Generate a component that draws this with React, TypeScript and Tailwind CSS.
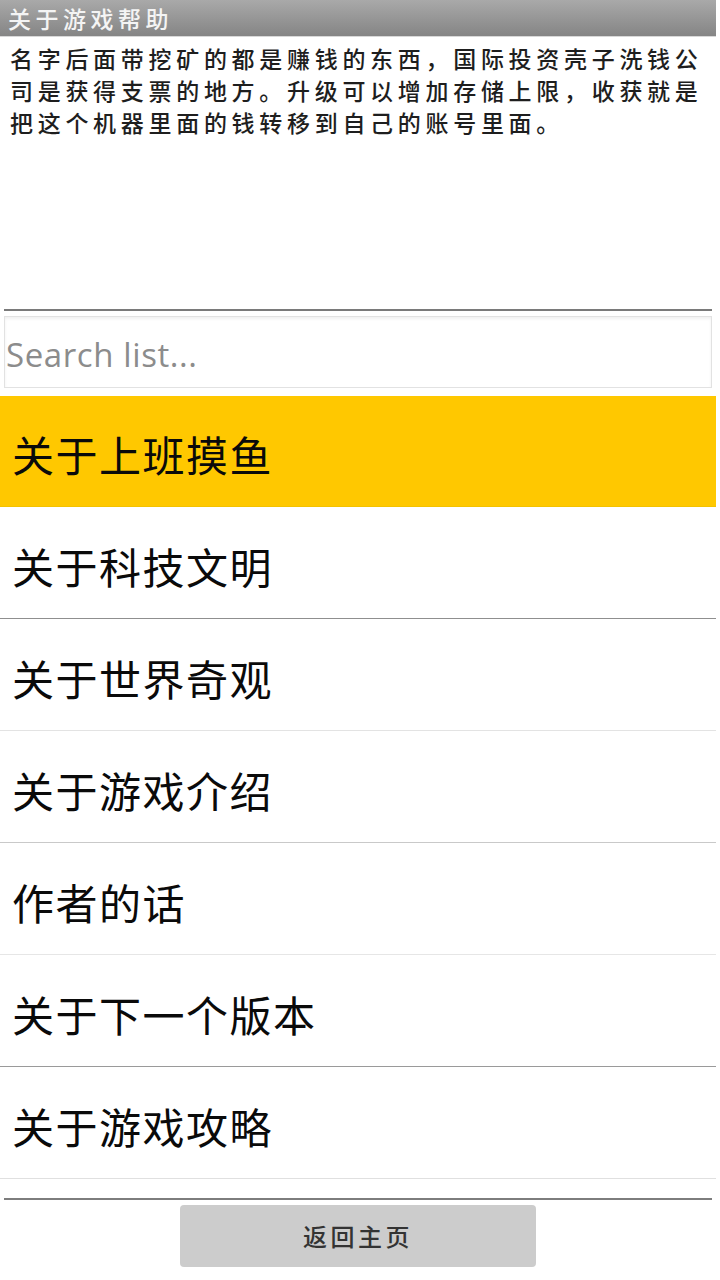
import React from "react";

const cjk = { fontFamily: '"Noto Sans CJK SC", "Noto Sans", sans-serif' };

const items = [
  { label: "关于上班摸鱼", line: "border-[#f3c200]" },
  { label: "关于科技文明", line: "border-[#8f8f8f]" },
  { label: "关于世界奇观", line: "border-[#e3e3e3]" },
  { label: "关于游戏介绍", line: "border-[#c9c9c9]" },
  { label: "作者的话", line: "border-[#e6e6e6]" },
  { label: "关于下一个版本", line: "border-[#9a9a9a]" },
  { label: "关于游戏攻略", line: "border-[#e0e0e0]" },
];

function App() {
  return (
    <div className="w-[720px] h-[1280px] bg-white overflow-hidden flex flex-col" style={cjk}>
      <div className="w-[716px] h-[37px] bg-gradient-to-b from-[#a9a9a9] to-[#858585] border-b border-[#d8d8d8] flex items-center pl-[8px]">
        <span className="text-[23px] font-medium tracking-[4.5px] text-[#f4f4f4] leading-none">关于游戏帮助</span>
      </div>
      <div className="h-[272px] pl-[10px] pt-[5px]">
        <p className="w-[700px] text-[23px] font-medium leading-[32px] tracking-[4.7px] text-[#1e1e1e]">
          名字后面带挖矿的都是赚钱的东西，国际投资壳子洗钱公司是获得支票的地方。升级可以增加存储上限，收获就是把这个机器里面的钱转移到自己的账号里面。
        </p>
      </div>
      <div className="mx-[4px] w-[708px] h-[2px] bg-[#7a7a7a]" />
      <div className="mx-[4px] mt-[5px] w-[708px] h-[72px] border border-[#e2e2e2] shadow-[inset_0_2px_3px_rgba(0,0,0,0.06)] flex items-center pl-[1px] pt-[6px]">
        <span className="text-[33px] tracking-[0.6px] text-[#8c8c8c]" style={{ fontFamily: '"Open Sans", Lato, sans-serif' }}>
          Search list...
        </span>
      </div>
      <div className="mt-[8px] w-[716px] flex flex-col">
        {items.map((it, i) => (
          <div
            key={it.label}
            className={`${i === 0 ? "h-[111px] bg-[#ffc800]" : "h-[112px] bg-white"} border-b ${it.line} flex items-center pl-[12px] pt-[6px]`}
          >
            <span className="text-[42px] tracking-[1.5px] text-[#0a0a0a] leading-none">{it.label}</span>
          </div>
        ))}
      </div>
      <div className="mt-[19px] mx-[4px] w-[708px] h-[2px] bg-[#7d7d7d]" />
      <div className="mt-[5px] flex justify-center pr-[4px]">
        <button className="w-[356px] h-[62px] bg-[#cccccc] rounded-[4px] flex items-center justify-center">
          <span className="text-[24px] font-medium tracking-[3.5px] text-[#333333] leading-none">返回主页</span>
        </button>
      </div>
    </div>
  );
}

export default App;
